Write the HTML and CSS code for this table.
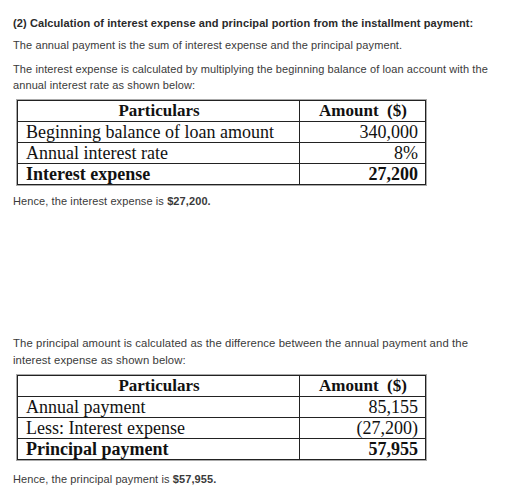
FILE: index.html
```html
<!DOCTYPE html>
<html>
<head>
<meta charset="utf-8">
<link rel="stylesheet" href="styles.css">
</head>
<body>
<div class="page">
  <p class="txt heading">(2) Calculation of interest expense and principal portion from the installment payment:</p>
  <p class="txt p2">The annual payment is the sum of interest expense and the principal payment.</p>
  <p class="txt p3">The interest expense is calculated by multiplying the beginning balance of loan account with the annual interest rate as shown below:</p>
  <table class="calc t1">
    <tr class="head"><th class="c1">Particulars</th><th class="c2">Amount&nbsp; ($)</th></tr>
    <tr><td class="c1">Beginning balance of loan amount</td><td class="c2">340,000</td></tr>
    <tr><td class="c1">Annual interest rate</td><td class="c2">8%</td></tr>
    <tr class="total"><td class="c1">Interest expense</td><td class="c2">27,200</td></tr>
  </table>
  <p class="txt hence1">Hence, the interest expense is <b>$27,200.</b></p>
  <p class="txt p4">The principal amount is calculated as the difference between the annual payment and the interest expense as shown below:</p>
  <table class="calc t2">
    <tr class="head"><th class="c1">Particulars</th><th class="c2">Amount&nbsp; ($)</th></tr>
    <tr><td class="c1">Annual payment</td><td class="c2">85,155</td></tr>
    <tr><td class="c1">Less: Interest expense</td><td class="c2">(27,200)</td></tr>
    <tr class="total"><td class="c1">Principal payment</td><td class="c2">57,955</td></tr>
  </table>
  <p class="txt hence2">Hence, the principal payment is <b>$57,955.</b></p>
</div>
</body>
</html>
```
FILE: styles.css
```css
html, body {
  margin: 0;
  padding: 0;
  background: #fff;
}
.page {
  padding: 0 13px;
  width: 487px;
}
.txt {
  font-family: "Liberation Sans", Arial, sans-serif;
  font-size: 11px;
  letter-spacing: 0.1px;
  line-height: 16px;
  color: #3a3a3a;
  margin: 0;
}
.heading {
  font-weight: bold;
  color: #2a2a2a;
  margin-top: 15px;
}
.p2 { margin-top: 6px; }
.p3 { margin-top: 8px; }
.hence1 { margin-top: 8px; }
.p4 {
  margin-top: 126px;
  max-width: 470px;
  font-size: 11.3px;
  letter-spacing: 0.1px;
  line-height: 17px;
}
.hence2 { margin-top: 11px; }
.calc {
  border-collapse: collapse;
  margin-left: 4px;
  font-family: "Liberation Serif", "Times New Roman", serif;
  color: #111;
  border: 1px solid #222;
  box-shadow: 0 0 0 1px #aaa;
}
.t1 { margin-top: 7px; }
.t2 { margin-top: 6px; }
.calc th, .calc td {
  border: 1px solid #222;
  height: 20px;
  padding: 0 7px 0 8px;
  font-size: 18px;
  line-height: 20px;
}
.calc th {
  font-size: 17px;
  font-weight: bold;
  text-align: center;
}
.calc .c1 { width: 266px; text-align: left; }
.calc .c2 { width: 110px; text-align: right; }
.calc th.c1, .calc th.c2 { text-align: center; }
.calc .total td { font-weight: bold; }
```
